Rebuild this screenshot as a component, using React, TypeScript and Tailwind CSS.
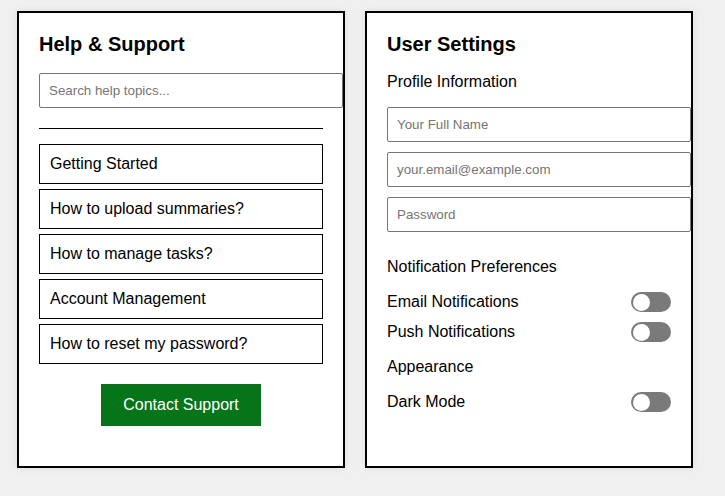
import React from "react";

function Toggle() {
  return (
    <div className="relative w-[40px] h-[20px] rounded-full bg-[#7a7a7a] shrink-0">
      <div className="absolute left-[1.5px] top-[1.5px] w-[17px] h-[17px] rounded-full bg-white" />
    </div>
  );
}

const topics = [
  "Getting Started",
  "How to upload summaries?",
  "How to manage tasks?",
  "Account Management",
  "How to reset my password?",
];

export default function App() {
  return (
    <div
      className="min-h-screen bg-[#f0f0f0] flex items-start gap-[20px] pl-[17px] pt-[11px] text-black"
      style={{ fontFamily: '"Liberation Sans", Arial, sans-serif' }}
    >
      {/* Help & Support */}
      <div className="w-[328px] h-[457px] bg-white border-2 border-black p-[20px] flex flex-col shadow-[0_0_8px_rgba(0,0,0,0.08)]">
        <h2 className="text-[20px] leading-[23px] font-bold">Help &amp; Support</h2>
        <input
          className="mt-[17px] w-[304px] h-[35px] shrink-0 border border-[#767676] rounded-[2px] px-[9px] text-[13.33px] placeholder:text-[#757575] outline-none bg-white relative z-10"
          placeholder="Search help topics..."
        />
        <div className="mt-[20px] h-px bg-black w-full" />
        <div className="mt-[15px] flex flex-col gap-[5px]">
          {topics.map((t) => (
            <div key={t} className="h-[40px] border border-black px-[10px] flex items-center text-[16px] leading-[18px]">
              {t}
            </div>
          ))}
        </div>
        <div className="mt-[20px] flex justify-center">
          <button className="w-[160px] h-[42px] bg-[#067519] text-white text-[16px]">Contact Support</button>
        </div>
      </div>

      {/* User Settings */}
      <div className="w-[328px] h-[457px] bg-white border-2 border-black p-[20px] flex flex-col shadow-[0_0_8px_rgba(0,0,0,0.08)]">
        <h2 className="text-[20px] leading-[23px] font-bold">User Settings</h2>
        <div className="mt-[17px] text-[16px] leading-[18px]">Profile Information</div>
        <div className="mt-[16px] flex flex-col gap-[10px]">
          {["Your Full Name", "your.email@example.com", "Password"].map((p) => (
            <input
              key={p}
              type={p === "Password" ? "password" : "text"}
              className="w-[304px] h-[35px] shrink-0 border border-[#767676] rounded-[2px] px-[9px] text-[13.33px] placeholder:text-[#757575] outline-none bg-white relative z-10"
              placeholder={p}
            />
          ))}
        </div>
        <div className="mt-[26px] text-[16px] leading-[18px]">Notification Preferences</div>
        <div className="mt-[16px] flex items-center justify-between h-[20px] text-[16px]">
          <span>Email Notifications</span>
          <Toggle />
        </div>
        <div className="mt-[10px] flex items-center justify-between h-[20px] text-[16px]">
          <span>Push Notifications</span>
          <Toggle />
        </div>
        <div className="mt-[16px] text-[16px] leading-[18px]">Appearance</div>
        <div className="mt-[16px] flex items-center justify-between h-[20px] text-[16px]">
          <span>Dark Mode</span>
          <Toggle />
        </div>
      </div>
    </div>
  );
}
